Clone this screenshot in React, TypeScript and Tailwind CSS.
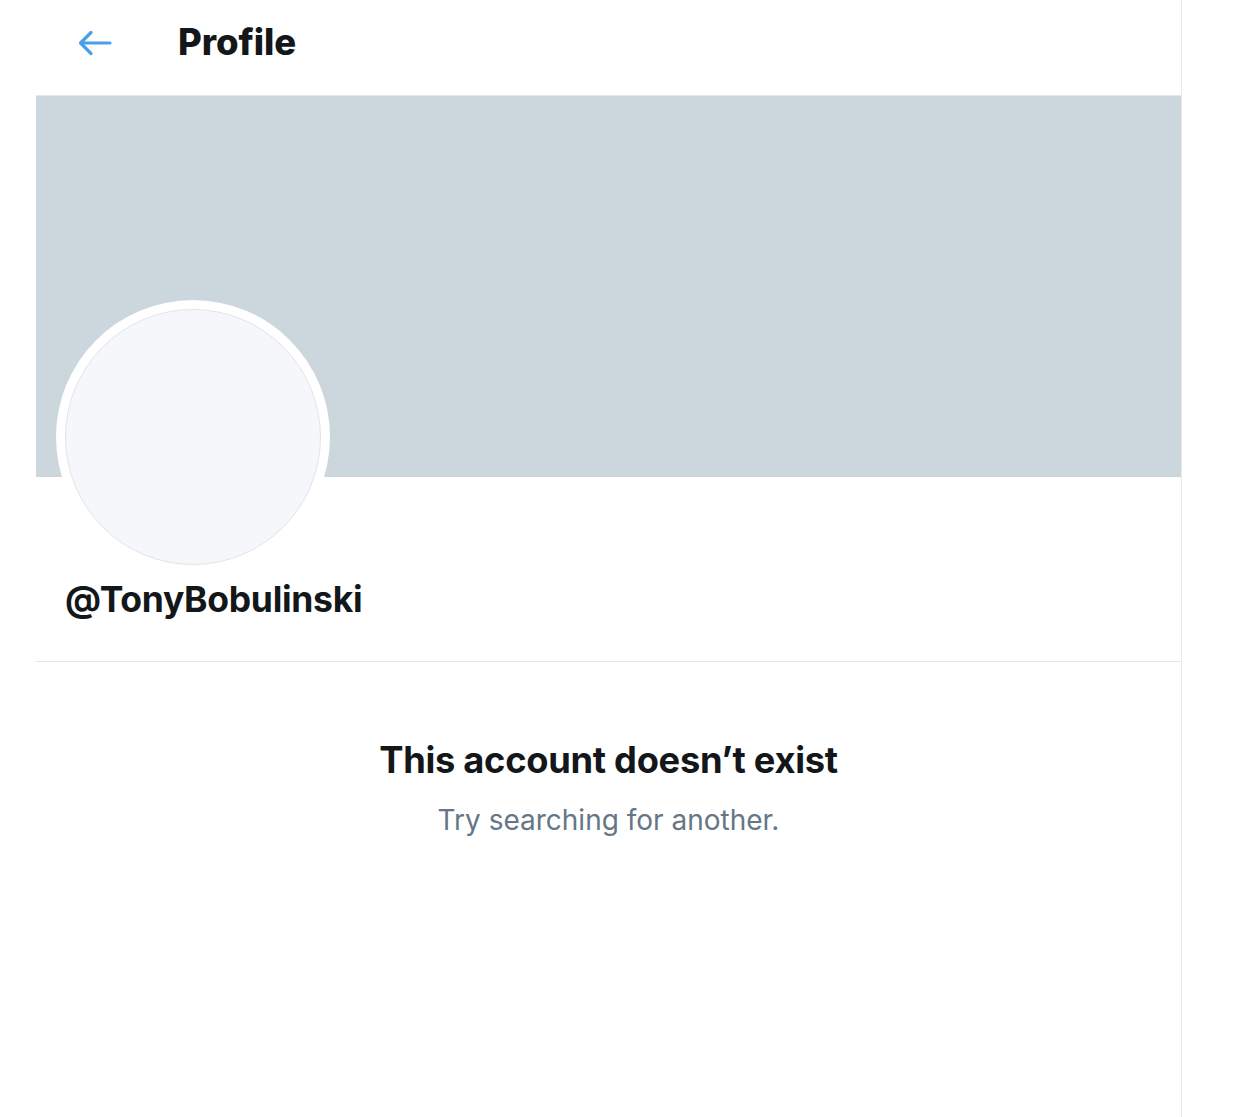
import React from "react";

export default function App() {
  return (
    <div
      className="w-[1242px] h-[1117px] bg-white flex overflow-hidden"
      style={{ fontFamily: "Inter, 'Noto Sans', 'Liberation Sans', sans-serif" }}
    >
      <div className="w-[36px] shrink-0" />
      <div className="w-[1146px] shrink-0 border-r border-[#e9ecef] flex flex-col">
        {/* Header */}
        <div className="h-[96px] shrink-0 border-b border-[#e6e9eb] flex items-center">
          <div className="w-[142px] pl-[42px] flex items-center -mt-[10px]">
            <svg width="34" height="26" viewBox="0 0 34 26" fill="none">
              <path
                d="M32 13H3M13 2.5L2.5 13L13 23.5"
                stroke="#4a9fe8"
                strokeWidth="3.2"
                strokeLinecap="round"
                strokeLinejoin="round"
              />
            </svg>
          </div>
          <div className="text-[36.5px] font-extrabold text-[#14171a] leading-none -mt-[10px] tracking-[-0.1px]">
            Profile
          </div>
        </div>

        {/* Banner */}
        <div className="h-[381px] shrink-0 bg-[#ccd6dd]" />

        {/* Profile info */}
        <div className="border-b border-[#e3e6e8] pl-[20px] pb-[38px]">
          <div className="-mt-[177px] w-[274px] h-[274px] rounded-full bg-white flex items-center justify-center">
            <div className="w-[256px] h-[256px] rounded-full bg-[#f5f7fa] border border-[#e1e4e8]" />
          </div>
          <div className="pl-[9px] mt-[3px] text-[35.5px] font-bold text-[#14171a] leading-[46px] tracking-[-0.3px]">
            @TonyBobulinski
          </div>
        </div>

        {/* Message */}
        <div className="flex flex-col items-center pt-[76px]">
          <div className="text-[36.3px] font-bold text-[#14171a] leading-[44px] tracking-[-0.3px]">
            This account doesn’t exist
          </div>
          <div className="mt-[20px] text-[28px] text-[#657786] leading-[36px]">
            Try searching for another.
          </div>
        </div>
      </div>
    </div>
  );
}
